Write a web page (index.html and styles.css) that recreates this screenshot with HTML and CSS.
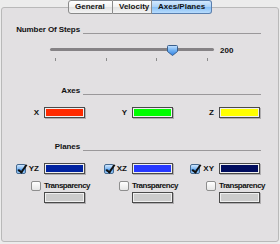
FILE: index.html
```html
<!DOCTYPE html>
<html lang="en">
<head>
  <meta charset="UTF-8" />
  <title>Axes/Planes</title>
  <link rel="stylesheet" href="styles.css">
</head>
<body>
  <div class="tabs">
    <span class="tab">General</span>
    <span class="tab">Velocity</span>
    <span class="tab active">Axes/Planes</span>
  </div>

  <div class="panel">
    <div class="header"><span class="header-label">Number Of Steps</span><span class="header-line"></span></div>

    <div class="slider-row">
      <div class="slider">
        <div class="track"></div>
        <svg class="thumb" width="11" height="11" viewBox="0 0 11 11">
          <defs>
            <linearGradient id="thumbFill" x1="0" y1="0" x2="0" y2="1">
              <stop offset="0" stop-color="#c6e2ff"/>
              <stop offset="0.5" stop-color="#6fb0f2"/>
              <stop offset="1" stop-color="#2f7ee0"/>
            </linearGradient>
          </defs>
          <path d="M1.5 0.5 H9.5 Q10.5 0.5 10.5 1.5 V6.5 L5.5 10.5 L0.5 6.5 V1.5 Q0.5 0.5 1.5 0.5 Z" fill="url(#thumbFill)" stroke="#3a5f8c" stroke-width="1"/>
        </svg>
      </div>
      <span class="slider-value">200</span>
    </div>
    <div class="ticks"><i></i><i></i><i></i><i></i></div>

    <div class="header gap-big"><span class="header-label">Axes</span><span class="header-line"></span></div>
    <div class="row gap-mid">
      <span class="cell">X</span><span class="well red"></span>
      <span class="cell">Y</span><span class="well green"></span>
      <span class="cell">Z</span><span class="well yellow"></span>
    </div>

    <div class="header gap-big"><span class="header-label">Planes</span><span class="header-line"></span></div>
    <div class="row gap-mid">
      <span class="cell"><span class="check on"></span><span class="plane-name">YZ</span></span><span class="well blue1"></span>
      <span class="cell"><span class="check on"></span><span class="plane-name">XZ</span></span><span class="well blue2"></span>
      <span class="cell"><span class="check on"></span><span class="plane-name">XY</span></span><span class="well blue3"></span>
    </div>
    <div class="row gap-small">
      <span class="cell"><span class="check"></span></span><span class="trans">Transparency</span>
      <span class="cell"><span class="check"></span></span><span class="trans">Transparency</span>
      <span class="cell"><span class="check"></span></span><span class="trans">Transparency</span>
    </div>
    <div class="row gap-tiny">
      <span class="cell"></span><span class="well gray"></span>
      <span class="cell"></span><span class="well gray"></span>
      <span class="cell"></span><span class="well gray"></span>
    </div>
  </div>
</body>
</html>
```

FILE: styles.css
```css
* { box-sizing: border-box; }
body {
  margin: 0;
  background-color: #ececec;
  font-family: 'Liberation Sans', Arial, sans-serif;
  font-size: 8px;
  font-weight: bold;
  color: #111;
  width: 280px;
  height: 244px;
  overflow: hidden;
}

/* tab strip */
.tabs {
  display: flex; justify-content: center;
  position: relative; z-index: 1;
  height: 14px;
}
.tab {
  height: 14px; line-height: 12px;
  padding: 0 6px;
  border: 1px solid #8a8a8a; border-left: none;
  background: linear-gradient(#ffffff, #f1f1f1 50%, #e2e2e2 51%, #f4f4f4);
}
.tab:first-child { border-left: 1px solid #8a8a8a; border-radius: 3px 0 0 3px; width: 45px; }
.tab:nth-child(2) { width: 39px; }
.tab:last-child { border-radius: 0 3px 3px 0; width: 60px; }
.tab.active {
  background: linear-gradient(#d3e9fe, #a9d1f8 50%, #86bff6 51%, #b8dcfd);
  border-color: #5a7fae;
}

/* group box */
.panel {
  margin: -7px 1px 0;
  height: 235px;
  border: 1px solid #b9b9b9;
  border-radius: 3px;
  background-color: #e2e0e2;
  padding: 17px 0 0 1px;
}

.header {
  display: flex; align-items: flex-end;
  height: 9px; padding-right: 17px;
}
.header-label {
  width: 77px; text-align: right;
  line-height: 9px; margin-right: 3px;
  letter-spacing: -0.1px;
}
.header-line { flex: 1; height: 1px; background-color: #9a989a; }

.slider-row {
  display: flex; align-items: center;
  height: 12px; margin-top: 10px; padding-left: 47px;
}
.slider { position: relative; width: 164px; height: 12px; }
.track {
  position: absolute; left: 0; right: 0; top: 4px;
  height: 3px; border-radius: 2px;
  background-color: #858285;
}
.thumb { position: absolute; left: 117px; top: 1px; }
.slider-value { margin-left: 6px; }

.ticks {
  display: flex; justify-content: space-between;
  width: 153px; height: 4px;
  margin: 2px 0 0 52px;
}
.ticks i { width: 1px; height: 3px; background-color: #8c8c8c; }

.gap-big { margin-top: 24px; }
.gap-mid { margin-top: 12px; }
.gap-small { margin-top: 6px; }
.gap-tiny { margin-top: 1px; }

.row {
  display: grid;
  grid-template-columns: 41px 41px 47px 41px 46px 41px;
  height: 11px; align-items: center;
}
.cell {
  display: flex; justify-content: flex-end; align-items: center;
  padding-right: 5px; height: 11px;
}
.plane-name { margin-left: 3px; }

.well {
  width: 41px; height: 11px;
  border: 1px solid #4a4a4a;
  box-shadow: inset 0 0 0 1px #f0f0f0, 1px 1px 0 #b0aeb0;
}
.red { background-color: #ff2a00; }
.green { background-color: #00ff00; }
.yellow { background-color: #ffff00; }
.blue1 { background-color: #0022a0; }
.blue2 { background-color: #2638ff; }
.blue3 { background-color: #000c5e; }
.gray { background-color: #cccccc; }

.trans { white-space: nowrap; line-height: 11px; letter-spacing: -0.5px; }

.check {
  position: relative;
  width: 10px; height: 10px;
  border: 1px solid #8e8e8e; border-radius: 2px;
  background: linear-gradient(#ffffff, #e6e6e6);
}
.gap-small .cell { padding-right: 3px; }
.check.on {
  border-color: #45698f;
  background: linear-gradient(#cfe6fd, #7db7f2 50%, #4c97e6 51%, #9ccdfb);
}
.check.on::after {
  content: "";
  position: absolute; left: 3px; top: -2px;
  width: 3px; height: 8px;
  border: solid #111; border-width: 0 2px 2px 0;
  transform: rotate(35deg);
}
```
